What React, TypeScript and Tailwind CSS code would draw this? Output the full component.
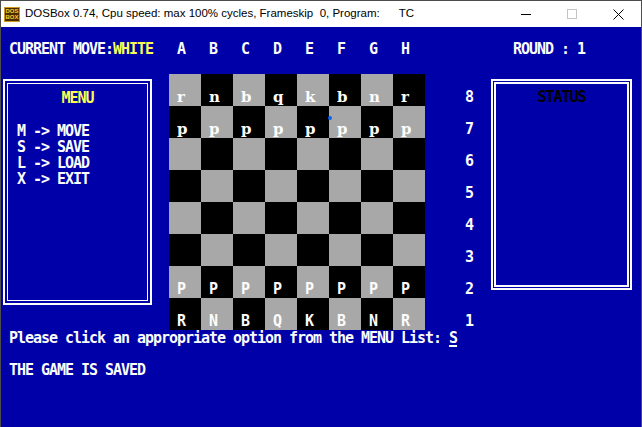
import React from 'react'

const ranks = ['rnbqkbnr', 'pppppppp', '', '', '', '', 'PPPPPPPP', 'RNBQKBNR']

const dos = { fontFamily: '"DejaVu Sans Mono", "Liberation Mono", monospace' }
const serif = { fontFamily: '"DejaVu Serif", "Liberation Serif", serif' }

const menuText = 'M -> MOVE\nS -> SAVE\nL -> LOAD\nX -> EXIT'

const Board: React.FC = () => (
  <div className="grid grid-cols-8 w-[256px] h-[256px]">
    {ranks.map((rank, r) =>
      Array.from({ length: 8 }).map((_, c) => {
        const light = (r + c) % 2 === 0
        const piece = rank[c] || ''
        const lower = piece !== '' && piece === piece.toLowerCase()
        return (
          <div
            key={`${r}-${c}`}
            className={`w-[32px] h-[32px] flex items-end pl-[8px] pb-px ${light ? 'bg-[#a8a8a8]' : 'bg-black'}`}
          >
            {piece && (
              <span
                className={`text-[#fcfcfc] leading-[16px] ${lower ? 'text-[15px] font-bold' : 'text-[15px] font-bold tracking-[-1px]'}`}
                style={lower ? serif : dos}
              >
                {piece}
              </span>
            )}
          </div>
        )
      })
    )}
  </div>
)

const App: React.FC = () => {
  return (
    <div className="w-[642px] h-[427px] flex flex-col border-x border-t border-[#4d4d4d] overflow-hidden">
      {/* Title bar */}
      <div className="h-[26px] shrink-0 bg-white flex items-center" style={{ fontFamily: '"Liberation Sans", Arial, sans-serif' }}>
        <div className="ml-[3px] w-[16px] h-[15px] bg-[#4a2e00] border border-[#c89a20] flex flex-col items-center justify-center leading-[6px]">
          <span className="text-[6px] font-bold text-[#ffd030]">DOS</span>
          <span className="text-[6px] font-bold text-[#ffd030]">BOX</span>
        </div>
        <span className="ml-[5px] text-[11.5px] text-black whitespace-pre">
          DOSBox 0.74, Cpu speed: max 100% cycles, Frameskip  0, Program:      TC
        </span>
        <div className="ml-auto flex items-center h-full">
          <div className="w-[46px] h-full flex items-center justify-center">
            <div className="w-[10px] h-px bg-black" />
          </div>
          <div className="w-[46px] h-full flex items-center justify-center">
            <div className="w-[10px] h-[10px] border border-[#c4c4c4]" />
          </div>
          <div className="w-[46px] h-full flex items-center justify-center">
            <svg width="11" height="11" viewBox="0 0 11 11">
              <path d="M0.5 0.5 L10.5 10.5 M10.5 0.5 L0.5 10.5" stroke="#000" strokeWidth="1" />
            </svg>
          </div>
        </div>
      </div>

      {/* DOS screen */}
      <div className="flex-1 bg-[#0000a8] relative text-[#fcfcfc] text-[15px] font-bold leading-[16px] tracking-[-1.03px]" style={dos}>
        <div className="flex">
          {/* left column */}
          <div className="w-[168px] flex flex-col">
            <div className="h-[47px] pt-[14px] pl-[8px] whitespace-pre">
              CURRENT MOVE:<span className="text-[#fcfc54]">WHITE</span>
            </div>
            <div className="ml-[2px] mt-[5px] w-[149px] h-[226px] border-2 border-[#fcfcfc] p-[2px]">
              <div className="h-full border border-[#fcfcfc] pt-[6px]">
                <div className="text-center text-[#fcfc54]">MENU</div>
                <div className="mt-[17px] pl-[9px] whitespace-pre">{menuText}</div>
              </div>
            </div>
          </div>

          {/* board column */}
          <div className="w-[256px] flex flex-col">
            <div className="h-[47px] pt-[14px] grid grid-cols-8">
              {['A', 'B', 'C', 'D', 'E', 'F', 'G', 'H'].map(l => (
                <div key={l} className="pl-[8px]">{l}</div>
              ))}
            </div>
            <Board />
          </div>

          {/* rank numbers */}
          <div className="w-[66px] flex flex-col">
            <div className="h-[47px]" />
            {[8, 7, 6, 5, 4, 3, 2, 1].map(n => (
              <div key={n} className="h-[32px] flex items-end pl-[40px] pb-px">{n}</div>
            ))}
          </div>

          {/* right column */}
          <div className="flex-1 flex flex-col">
            <div className="h-[47px] pt-[14px] pl-[22px] whitespace-pre">ROUND : 1</div>
            <div className="mt-[5px] w-[141px] h-[211px] border-2 border-[#fcfcfc] p-px">
              <div className="h-full border-2 border-[#fcfcfc] pt-[5px]">
                <div className="text-center text-black">STATUS</div>
              </div>
            </div>
          </div>
        </div>

        {/* prompt */}
        <div className="pl-[8px] whitespace-pre">
          <div>
            Please click an appropriate option from the MENU List: <span className="underline underline-offset-[2px] decoration-2">S</span>
          </div>
          <div>&nbsp;</div>
          <div>THE GAME IS SAVED</div>
        </div>

        {/* mouse cursor */}
        <div className="absolute left-[327px] top-[89px] w-[4px] h-[4px] rounded-full bg-[#1060f0]" />
      </div>
    </div>
  )
}

export default App
